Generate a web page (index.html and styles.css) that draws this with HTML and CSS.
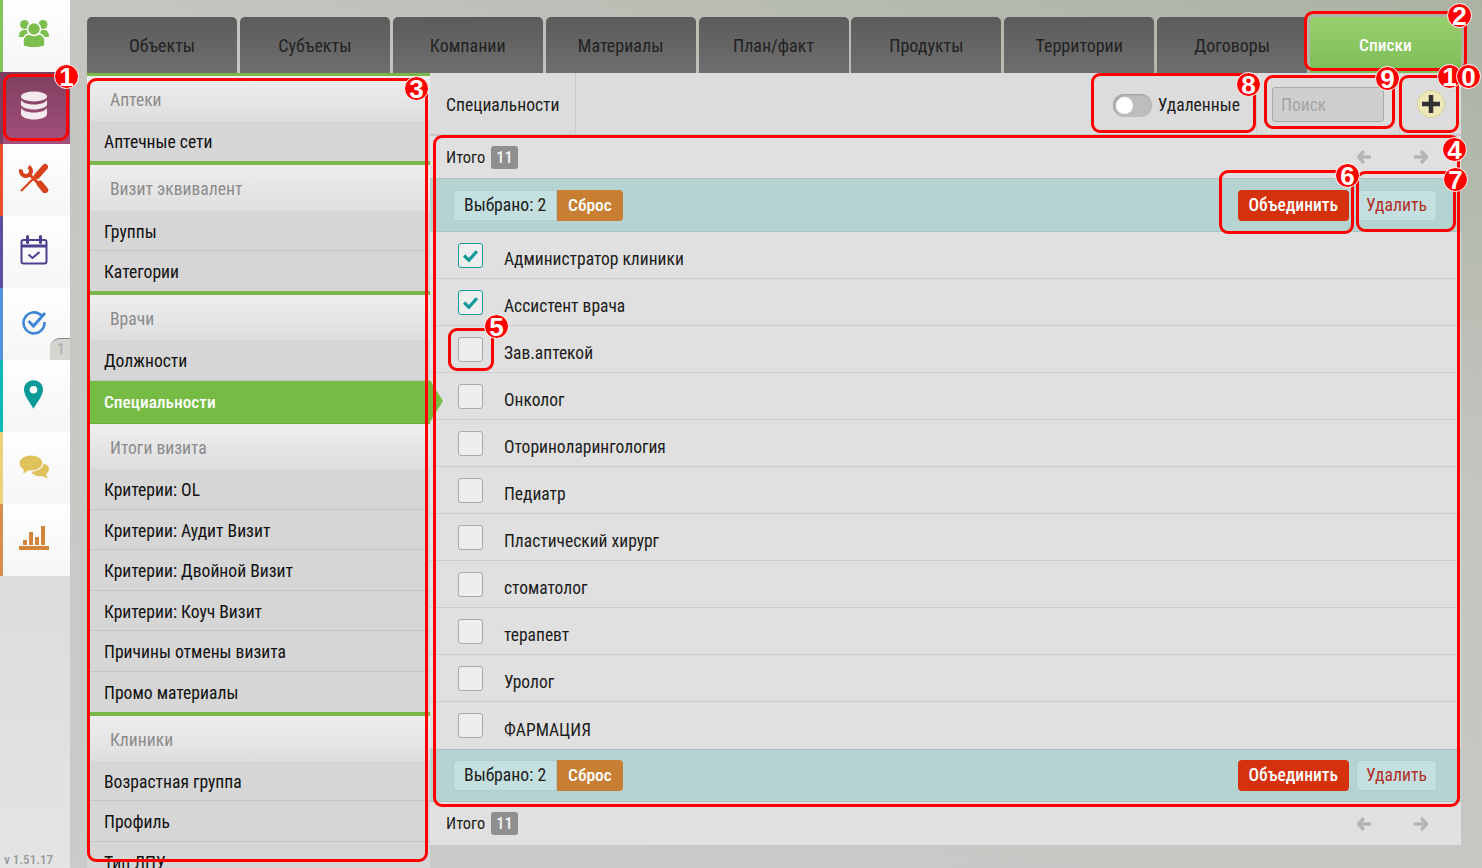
FILE: index.html
```html
<!DOCTYPE html>
<html lang="en">
<head>
    <meta charset="UTF-8">
    <meta name="viewport" content="width=device-width, initial-scale=1.0">
    <title>Списки</title>
    <link rel="stylesheet" href="styles.css">
</head>
<body>
<div class="app">
    <!-- left rail -->
    <nav class="rail">
        <a class="rail-item stripe-green">
            <svg viewBox="0 0 30 28" width="30" height="28"><g fill="#7dbf4f"><circle cx="5.500" cy="4.500" r="4.500"/><circle cx="24" cy="4.500" r="4.500"/><path d="M0 17c0-5 2-7 5-7h5v7zM30 17c0-5-2-7-5-7h-5v7z"/><path d="M4 26v-5c0-4 3-7 6-7h10c3 0 6 3 6 7v5c-4 2.500-18 2.500-22 0z" stroke="#fff" stroke-width="1.500"/><circle cx="15" cy="9" r="6.500" stroke="#fff" stroke-width="1.500"/></g></svg>
        </a>
        <a class="rail-item rail-active">
            <svg viewBox="0 0 28 30" width="28" height="30" fill="#f3e9ee"><ellipse cx="14" cy="5.500" rx="13" ry="5"/><path d="M1 9c2 3 7 4.500 13 4.500S25 12 27 9v4.500c0 2.500-6 5-13 5s-13-2.500-13-5z"/><path d="M1 17c2 3 7 4.500 13 4.500S25 20 27 17v6c0 3-6 5.500-13 5.500S1 26 1 23z"/></svg>
        </a>
        <a class="rail-item stripe-orange">
            <svg viewBox="0 0 30 30" width="30" height="30" fill="none" stroke="#d9401c"><path d="M2.200 6.500A5 5 0 1 0 9.500 3.700" stroke-width="4"/><path d="M10 11l10 10" stroke-width="3"/><path d="M21 21l5 6" stroke-width="6.500" stroke-linecap="round"/><path d="M26 4l-8 9" stroke-width="6" stroke-linecap="round"/><path d="M17 13L2 28" stroke-width="2.200"/></svg>
        </a>
        <a class="rail-item stripe-purple">
            <svg viewBox="0 0 28 30" width="28" height="30" fill="none" stroke="#4d3f8f" stroke-width="2"><rect x="1.500" y="5" width="25" height="23.500" rx="2"/><path d="M1.500 11h25" stroke-width="3"/><path d="M7.500 1.500v6M20.500 1.500v6" stroke-width="3" stroke-linecap="round"/><path d="M8.500 19.500l4 3.500 7-6"/></svg>
        </a>
        <a class="rail-item stripe-blue">
            <svg viewBox="0 0 26 26" width="26" height="26" fill="none" stroke="#3f87d6" stroke-width="2.600"><path d="M20.500 6.500A10.500 10.500 0 1 0 23.500 13"/><path d="M7.500 12l5 5L24 4" stroke-width="3"/></svg>
            <span class="rail-count">1</span>
        </a>
        <a class="rail-item stripe-teal">
            <svg viewBox="0 0 20 30" width="19" height="29"><path d="M10 0C4 0 0 4.500 0 10c0 6 6 13 10 20 4-7 10-14 10-20C20 4.500 16 0 10 0z" fill="#0a9a97"/><circle cx="10" cy="10" r="4" fill="#fff"/></svg>
        </a>
        <a class="rail-item stripe-yellow">
            <svg viewBox="0 0 30 23" width="30" height="23" fill="#e0c25c"><path d="M17 10c3-3 9-2 12 1 2 3 1 6-2 8 0 1 1 3 2 4-2 0-4-1-6-2-4 1-8-1-10-3z"/><path d="M12 0c6.500 0 12 3.500 12 8s-5.500 8-12 8h-2.500C7.500 18 5 19 2.500 19.500c1-1.200 1.700-2.700 1.700-4.500C1.600 13.500 0 11 0 8c0-4.500 5.500-8 12-8z" stroke="#fafafa" stroke-width="1.200"/></svg>
        </a>
        <a class="rail-item stripe-amber">
            <svg viewBox="0 0 30 24" width="30" height="24" fill="#d2843a"><rect x="0" y="20" width="30" height="4"/><rect x="4" y="14" width="4" height="5"/><rect x="10" y="6" width="4" height="13"/><rect x="16" y="11" width="4" height="8"/><rect x="22" y="0" width="4" height="19"/></svg>
        </a>
        <div class="rail-fill"><span class="version">v 1.51.17</span></div>
    </nav>

    <div class="content">
        <!-- top tabs -->
        <div class="tabs">
            <a class="tab">Объекты</a>
            <a class="tab">Субъекты</a>
            <a class="tab">Компании</a>
            <a class="tab">Материалы</a>
            <a class="tab">План/факт</a>
            <a class="tab">Продукты</a>
            <a class="tab">Территории</a>
            <a class="tab">Договоры</a>
            <a class="tab tab-active">Списки</a>
        </div>

        <div class="columns">
            <!-- lists menu -->
            <aside class="side">
                <div class="side-head">Аптеки</div>
                <a class="side-item side-last">Аптечные сети</a>
                <div class="side-head">Визит эквивалент</div>
                <a class="side-item">Группы</a>
                <a class="side-item side-last">Категории</a>
                <div class="side-head">Врачи</div>
                <a class="side-item">Должности</a>
                <a class="side-item side-current">Специальности</a>
                <div class="side-head">Итоги визита</div>
                <a class="side-item">Критерии: OL</a>
                <a class="side-item">Критерии: Аудит Визит</a>
                <a class="side-item">Критерии: Двойной Визит</a>
                <a class="side-item">Критерии: Коуч Визит</a>
                <a class="side-item">Причины отмены визита</a>
                <a class="side-item side-last">Промо материалы</a>
                <div class="side-head">Клиники</div>
                <a class="side-item">Возрастная группа</a>
                <a class="side-item">Профиль</a>
                <a class="side-item">Тип ЛПУ</a>
            </aside>
            <span class="side-arrow"></span>

            <main class="main">
                <div class="toolbar">
                    <div class="tool-title">Специальности</div>
                    <div class="tool-toggle">
                        <span class="switch"><span class="knob"></span></span>
                        <span>Удаленные</span>
                    </div>
                    <div class="tool-search"><input class="search" placeholder="Поиск"></div>
                    <div class="tool-add">
                        <span class="add-btn">
                            <svg viewBox="0 0 16 16" width="18" height="18" fill="#333"><path d="M6 0h4v6h6v4h-6v6H6v-6H0V6h6z"/></svg>
                        </span>
                    </div>
                </div>

                <div class="totals">
                    <span>Итого</span><span class="count">11</span>
                    <span class="pager">
                        <svg viewBox="0 0 14 14" width="14" height="14"><path d="M7 1L1.500 7 7 13M2 7h12" fill="none" stroke="#b5b5b5" stroke-width="3.400"/></svg>
                        <svg viewBox="0 0 14 14" width="14" height="14"><path d="M7 1l5.500 6L7 13M12 7H0" fill="none" stroke="#b5b5b5" stroke-width="3.400"/></svg>
                    </span>
                </div>

                <div class="selbar selbar-top">
                    <span class="sel-group"><span class="sel-num">Выбрано: 2</span><a class="sel-reset">Сброс</a></span>
                    <span class="sel-actions"><a class="btn-merge">Объединить</a><a class="btn-del">Удалить</a></span>
                </div>

                <div class="rows">
                    <div class="row"><span class="check checked"><svg viewBox="0 0 16 14" width="17" height="15"><path d="M2 7l4.500 4.500L14 3" fill="none" stroke="#0f9a97" stroke-width="3"/></svg></span><span class="row-name">Администратор клиники</span></div>
                    <div class="row"><span class="check checked"><svg viewBox="0 0 16 14" width="17" height="15"><path d="M2 7l4.500 4.500L14 3" fill="none" stroke="#0f9a97" stroke-width="3"/></svg></span><span class="row-name">Ассистент врача</span></div>
                    <div class="row"><span class="check"></span><span class="row-name">Зав.аптекой</span></div>
                    <div class="row"><span class="check"></span><span class="row-name">Онколог</span></div>
                    <div class="row"><span class="check"></span><span class="row-name">Оториноларингология</span></div>
                    <div class="row"><span class="check"></span><span class="row-name">Педиатр</span></div>
                    <div class="row"><span class="check"></span><span class="row-name">Пластический хирург</span></div>
                    <div class="row"><span class="check"></span><span class="row-name">стоматолог</span></div>
                    <div class="row"><span class="check"></span><span class="row-name">терапевт</span></div>
                    <div class="row"><span class="check"></span><span class="row-name">Уролог</span></div>
                    <div class="row"><span class="check"></span><span class="row-name">ФАРМАЦИЯ</span></div>
                </div>

                <div class="selbar">
                    <span class="sel-group"><span class="sel-num">Выбрано: 2</span><a class="sel-reset">Сброс</a></span>
                    <span class="sel-actions"><a class="btn-merge">Объединить</a><a class="btn-del">Удалить</a></span>
                </div>

                <div class="totals totals-bottom">
                    <span>Итого</span><span class="count">11</span>
                    <span class="pager">
                        <svg viewBox="0 0 14 14" width="14" height="14"><path d="M7 1L1.500 7 7 13M2 7h12" fill="none" stroke="#b5b5b5" stroke-width="3.400"/></svg>
                        <svg viewBox="0 0 14 14" width="14" height="14"><path d="M7 1l5.500 6L7 13M12 7H0" fill="none" stroke="#b5b5b5" stroke-width="3.400"/></svg>
                    </span>
                </div>
            </main>
        </div>
    </div>

    <!-- red help marks on top of the screenshot -->
    <div class="mark mark-1"></div>
    <div class="mark mark-2"></div>
    <div class="mark mark-3"></div>
    <div class="mark mark-4"></div>
    <div class="mark mark-5"></div>
    <div class="mark mark-6"></div>
    <div class="mark mark-7"></div>
    <div class="mark mark-8"></div>
    <div class="mark mark-9"></div>
    <div class="mark mark-10"></div>
    <span class="pin pin-1">1</span>
    <span class="pin pin-2">2</span>
    <span class="pin pin-3">3</span>
    <span class="pin pin-4">4</span>
    <span class="pin pin-5">5</span>
    <span class="pin pin-6">6</span>
    <span class="pin pin-7">7</span>
    <span class="pin pin-8">8</span>
    <span class="pin pin-9">9</span>
    <span class="pin pin-10a">1</span>
    <span class="pin pin-10b">0</span>
</div>
</body>
</html>
```

FILE: styles.css
```css
* {
    box-sizing: border-box;
}
html, body {
    margin: 0;
    height: 100%;
    overflow: hidden;
}
body {
    font-family: "Roboto Condensed", Roboto, "Liberation Sans", sans-serif;
    font-size: 17.600px;
    color: #1c1c1c;
}
.app {
    position: relative;
    display: flex;
    width: 1482px;
    height: 868px;
    overflow: hidden;
    background: linear-gradient(200deg, #aab2a2 0%, #c4c5c0 35%, #cbcbca 100%);
}

/* left rail */
.rail {
    width: 70px;
    flex: none;
    display: flex;
    flex-direction: column;
}
.rail-item {
    position: relative;
    height: 72px;
    flex: none;
    display: flex;
    align-items: center;
    justify-content: center;
    padding: 0 6px 4px 0;
    border-left: 3px solid #ccc;
    background: linear-gradient(#fff, #f5f5f5);
}
.rail-active {
    background: linear-gradient(#7d3f5f, #a44f7c);
    border-left-color: #7d3f5f;
}
.stripe-green { border-left-color: #80c65a; }
.stripe-orange { border-left-color: #e8502c; }
.stripe-purple { border-left-color: #5c4ea0; }
.stripe-blue { border-left-color: #5294dc; }
.stripe-teal { border-left-color: #0bb8b8; }
.stripe-yellow { border-left-color: #e8d27c; }
.stripe-amber { border-left-color: #d58e4c; }
.rail-count {
    position: absolute;
    right: 0;
    bottom: 0;
    width: 20px;
    height: 22px;
    padding-left: 7px;
    font-size: 16px;
    line-height: 22px;
    color: #aaa;
    background: #d4d6d2;
    border-top-left-radius: 10px;
    border-top: 1px solid #888;
}
.rail-fill {
    flex: 1;
    display: flex;
    align-items: flex-end;
    padding: 0 0 1px 4px;
    background: linear-gradient(#dcdcdc, #e4e4e4);
}
.version {
    font-size: 13.200px;
    font-weight: 500;
    color: #999;
}

/* tabs */
.content {
    width: 1374px;
    margin-left: 17px;
    padding-top: 17px;
    display: flex;
    flex-direction: column;
}
.tabs {
    display: flex;
    gap: 2.875px;
    height: 56px;
}
.tab {
    width: 150px;
    display: flex;
    align-items: center;
    justify-content: center;
    font-size: 18px;
    color: #222;
    background: linear-gradient(#5c5c5c, #6e6e6e);
    border-radius: 5px 5px 0 0;
}
.tab-active {
    flex: 1;
    color: #fff;
    font-size: 17.400px;
    font-weight: 500;
    background: linear-gradient(#98cf6c, #7dbd58);
}

/* list menu */
.columns {
    position: relative;
    display: flex;
    height: 795px;
}
.side {
    width: 343px;
    flex: none;
    overflow: hidden;
    border-top: 3px solid #7ab648;
    background: #d6d6d6;
}
.side-head {
    height: 45.300px;
    padding: 14px 0 0 23px;
    color: #8c8c8c;
    background: linear-gradient(#eeeeee, #dedede);
}
.side-item {
    display: block;
    height: 40.500px;
    padding: 11px 0 0 17px;
    color: #111;
    border-bottom: 1px solid #c6c6c6;
    background: #d6d6d6;
}
.side-last {
    border-bottom: 4px solid #7ab648;
    height: 44px;
}
.side-current {
    height: 43px;
    padding-top: 11px;
    font-size: 17.300px;
    color: #fff;
    font-weight: 500;
    background: #76bb43;
    border-bottom: 1px solid #6eae3e;
}
.side-arrow {
    position: absolute;
    left: 343px;
    top: 307px;
    z-index: 1;
    border-style: solid;
    border-width: 21px 0 21px 13px;
    border-color: transparent transparent transparent #76bb43;
}

/* main panel */
.main {
    width: 1031px;
    flex: none;
    display: flex;
    flex-direction: column;
    background: #e0e0e0;
    height: 772px;
}
.toolbar {
    display: flex;
    flex: none;
    height: 63px;
    background: #dcdcdc;
    border-bottom: 2px solid #c8c8c8;
}
.tool-title {
    width: 146px;
    padding: 22px 0 0 16px;
    border-right: 1px solid #cbcbcb;
}
.tool-toggle {
    margin-left: auto;
    display: flex;
    align-items: center;
    gap: 6px;
    padding: 3px 16px 0 0;
    height: 100%;
}
.switch {
    position: relative;
    width: 39px;
    height: 23px;
    border-radius: 12px;
    background: #bdbdbd;
    box-shadow: inset 1px 1px 2px #999;
}
.knob {
    position: absolute;
    left: 3px;
    top: 3px;
    width: 17px;
    height: 17px;
    border-radius: 50%;
    background: #fff;
}
.tool-search {
    width: 144px;
    padding: 14px 0 0 15px;
    border-left: 1px solid #cbcbcb;
    border-right: 1px solid #cbcbcb;
}
.search {
    display: block;
    width: 112px;
    height: 35px;
    padding: 0 8px;
    font: inherit;
    border: 1px solid #aaa;
    border-radius: 3px;
    background: #cfcfcf;
}
.search::placeholder {
    color: #a5a5a5;
}
.tool-add {
    width: 61px;
    padding: 17px 0 0 17px;
}
.add-btn {
    display: flex;
    align-items: center;
    justify-content: center;
    width: 28px;
    height: 28px;
    border-radius: 50%;
    background: #efe8b8;
    border: 1px solid #d8d0a0;
}
.totals {
    display: flex;
    flex: none;
    align-items: center;
    gap: 6px;
    height: 42px;
    padding: 0 33px 0 16px;
    font-size: 16.400px;
    background: #e0e0e0;
}
.totals-bottom {
    height: 43px;
}
.count {
    padding: 0 5px;
    height: 23px;
    line-height: 23px;
    font-size: 16.500px;
    color: #f2f2f2;
    font-weight: 500;
    background: #8e8e8e;
    border-radius: 3px;
}
.pager {
    margin-left: auto;
    display: flex;
    gap: 43px;
}
.selbar {
    display: flex;
    flex: none;
    align-items: center;
    justify-content: space-between;
    height: 53px;
    padding: 0 24px 0 23px;
    font-size: 17.700px;
    background: #b4d3d1;
    border-top: 1px solid #a8c4c2;
    border-bottom: 1px solid #a8c4c2;
}
.selbar-top {
    height: 54px;
}
.sel-group {
    display: flex;
}
.sel-num {
    height: 31px;
    line-height: 29px;
    padding: 0 10px;
    background: #c4dfdf;
    border: 1px solid #aecdcc;
    border-radius: 4px 0 0 4px;
}
.sel-reset {
    height: 31px;
    line-height: 31px;
    padding: 0 11px;
    font-size: 17.400px;
    color: #fff;
    font-weight: 500;
    background: #c97f33;
    border-radius: 0 4px 4px 0;
}
.sel-actions {
    display: flex;
    gap: 7px;
}
.btn-merge {
    height: 31px;
    line-height: 31px;
    padding: 0 11px;
    font-size: 17.500px;
    color: #fff;
    font-weight: 500;
    background: #d4310c;
    border-radius: 4px;
}
.btn-del {
    height: 31px;
    line-height: 29px;
    padding: 0 9px;
    color: #b0312a;
    background: #c4dfdf;
    border: 1px solid #aecdcc;
    border-radius: 4px;
}
.rows {
    flex: none;
}
.row {
    display: flex;
    align-items: center;
    gap: 21px;
    height: 47px;
    padding-left: 28px;
    font-size: 17.500px;
    border-bottom: 1px solid #cdcdcd;
}
.row:last-child {
    border-bottom: 0;
}
.row-name {
    padding-top: 8px;
}
.check {
    display: flex;
    align-items: center;
    justify-content: center;
    width: 25px;
    height: 25px;
    background: #eeeeee;
    border: 1px solid #aaa;
    border-radius: 3px;
}
.checked {
    border-color: #1a9c99;
}

/* help marks */
.mark {
    position: absolute;
    z-index: 2;
    border: 3px solid #f00;
    border-radius: 9px;
}
.mark-1 { left: 3px; top: 74px; width: 66px; height: 67px; }
.mark-2 { left: 1304px; top: 11px; width: 163px; height: 60px; }
.mark-3 { left: 87px; top: 78px; width: 341px; height: 784px; }
.mark-4 { left: 433px; top: 135px; width: 1027px; height: 672px; }
.mark-5 { left: 448px; top: 328px; width: 46px; height: 43px; }
.mark-6 { left: 1219px; top: 170px; width: 135px; height: 64px; }
.mark-7 { left: 1356px; top: 171px; width: 100px; height: 61px; }
.mark-8 { left: 1091px; top: 73px; width: 165px; height: 60px; }
.mark-9 { left: 1264px; top: 75px; width: 131px; height: 54px; }
.mark-10 { left: 1399px; top: 75px; width: 60px; height: 58px; }
.pin {
    position: absolute;
    z-index: 3;
    width: 25px;
    height: 25px;
    border-radius: 50%;
    background: #f00;
    border: 1px solid #fff;
    color: #fff;
    font-family: "Liberation Sans", sans-serif;
    font-weight: 700;
    font-size: 26px;
    line-height: 24px;
    text-align: center;
}
.pin-1 { left: 54px; top: 64px; }
.pin-2 { left: 1447px; top: 3px; }
.pin-3 { left: 404px; top: 76px; }
.pin-4 { left: 1442px; top: 137px; }
.pin-5 { left: 484px; top: 314px; }
.pin-6 { left: 1335px; top: 163px; }
.pin-7 { left: 1443px; top: 167px; }
.pin-8 { left: 1236px; top: 72px; }
.pin-9 { left: 1375px; top: 66px; }
.pin-10a { left: 1437px; top: 64px; }
.pin-10b { left: 1456px; top: 64px; }
```
